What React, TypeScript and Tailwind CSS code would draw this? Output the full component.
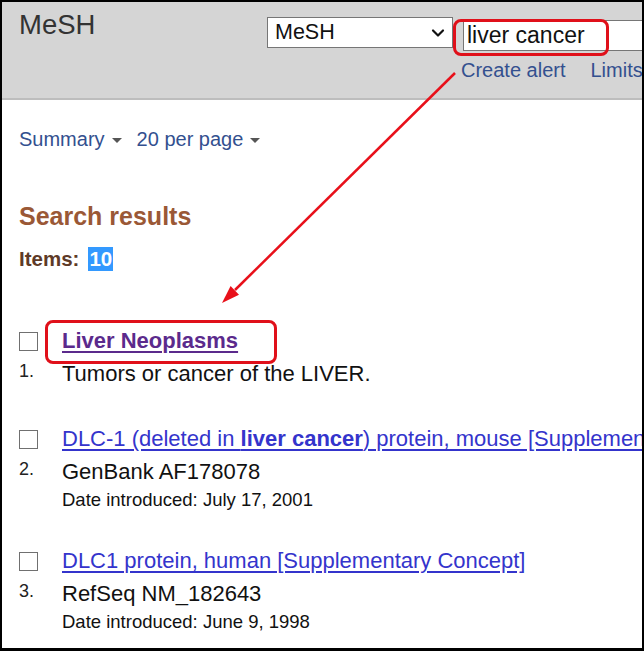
import { ChevronDown } from 'lucide-react'

function Caret() {
  return <span className="inline-block ml-[7px] mt-[3px] border-x-[5px] border-x-transparent border-t-[5px] border-t-[#555]" />
}

interface ResultProps {
  n: number
  title: React.ReactNode
  visited?: boolean
  line: string
  date?: string
  top: string
}

function Result({ n, title, visited, line, date, top }: ResultProps) {
  return (
    <div className={`grid grid-cols-[43px_1fr] ${top}`}>
      <div className="flex flex-col">
        <div className="w-[19px] h-[19px] border border-[#707070] bg-white mt-[4px]" />
        <div className="text-[18px] leading-[20px] text-[#222] mt-[10px]">{n}.</div>
      </div>
      <div className="min-w-0">
        <div
          className={`whitespace-nowrap text-[22px] leading-[26px] underline underline-offset-[3px] ${
            visited ? 'text-[#5b2a8c] font-bold decoration-[#5b2a8c]' : 'text-[#3434cc] decoration-[#3434cc]'
          }`}
        >
          {title}
        </div>
        <div className="text-[22px] leading-[26px] text-[#111] mt-[7px]">{line}</div>
        {date && <div className="text-[18.5px] leading-[22px] text-[#111] mt-[4px]">{date}</div>}
      </div>
    </div>
  )
}

export default function App() {
  return (
    <div className="relative w-[644px] h-[651px] overflow-hidden bg-white border-2 border-b-[3px] border-black font-['Liberation_Sans',Arial,sans-serif]">
      {/* Kopf */}
      <div className="h-[98px] bg-[#d5d5d5] border-b-2 border-[#bdbdbd] flex overflow-hidden">
        <div className="w-[265px] shrink-0 pl-[17px] pt-[8px] text-[27.5px] leading-[30px] text-[#333]">MeSH</div>
        <div className="flex-1 flex flex-col pt-[15px] min-w-0">
          <div className="flex">
            <div className="w-[186px] h-[31px] shrink-0 bg-white border border-[#767676] flex items-center justify-between pl-[7px] pr-[4px]">
              <span className="text-[21.5px] text-[#111]">MeSH</span>
              <ChevronDown size={20} strokeWidth={2.6} className="text-[#111]" />
            </div>
            <div className="ml-[10px] w-[300px] shrink-0 h-[31px] mt-[3px] bg-white border border-[#767676] pl-[3px] flex items-center">
              <span className="text-[23px] text-[#111]">liver cancer</span>
            </div>
          </div>
          <div className="flex gap-[25px] pl-[194px] mt-[8px] text-[20px] leading-[22px] text-[#33508f] whitespace-nowrap">
            <span>Create alert</span>
            <span>Limits</span>
          </div>
        </div>
      </div>

      {/* Inhalt */}
      <div className="pl-[17px]">
        <div className="flex items-center mt-[27px] text-[20px] leading-[24px] text-[#33508f]">
          <span>Summary</span>
          <Caret />
          <span className="ml-[15px]">20 per page</span>
          <Caret />
        </div>

        <div className="mt-[51px] text-[25px] leading-[28px] font-bold text-[#9a5836]">Search results</div>
        <div className="mt-[17px] flex items-center text-[20.5px] leading-[24px] font-bold text-[#5e3a27]">
          <span>Items:</span>
          <span className="ml-[9px] px-[1px] bg-[#3399ff] text-white">10</span>
        </div>

        <Result top="mt-[57px]" n={1} visited title="Liver Neoplasms" line="Tumors or cancer of the LIVER." />
        <Result
          top="mt-[39px]"
          n={2}
          title={
            <>
              DLC-1 (deleted in <b>liver cancer</b>) protein, mouse [Supplementary Concept]
            </>
          }
          line="GenBank AF178078"
          date="Date introduced: July 17, 2001"
        />
        <Result
          top="mt-[37px]"
          n={3}
          title="DLC1 protein, human [Supplementary Concept]"
          line="RefSeq NM_182643"
          date="Date introduced: June 9, 1998"
        />
      </div>

      {/* Markierungen */}
      <div className="absolute left-[451px] top-[17px] w-[156px] h-[37px] border-[3px] border-[#e0101a] rounded-[8px]" />
      <div className="absolute left-[43px] top-[318px] w-[232px] h-[44px] border-[3px] border-[#e0101a] rounded-[8px]" />
      <svg className="absolute -left-[2px] -top-[2px] pointer-events-none" width="644" height="651">
        <line x1="455" y1="73" x2="235" y2="290" stroke="#e8101a" strokeWidth="2.5" />
        <polygon points="222,303 230.6,286.1 239,294.7" fill="#e8101a" />
      </svg>
    </div>
  )
}
